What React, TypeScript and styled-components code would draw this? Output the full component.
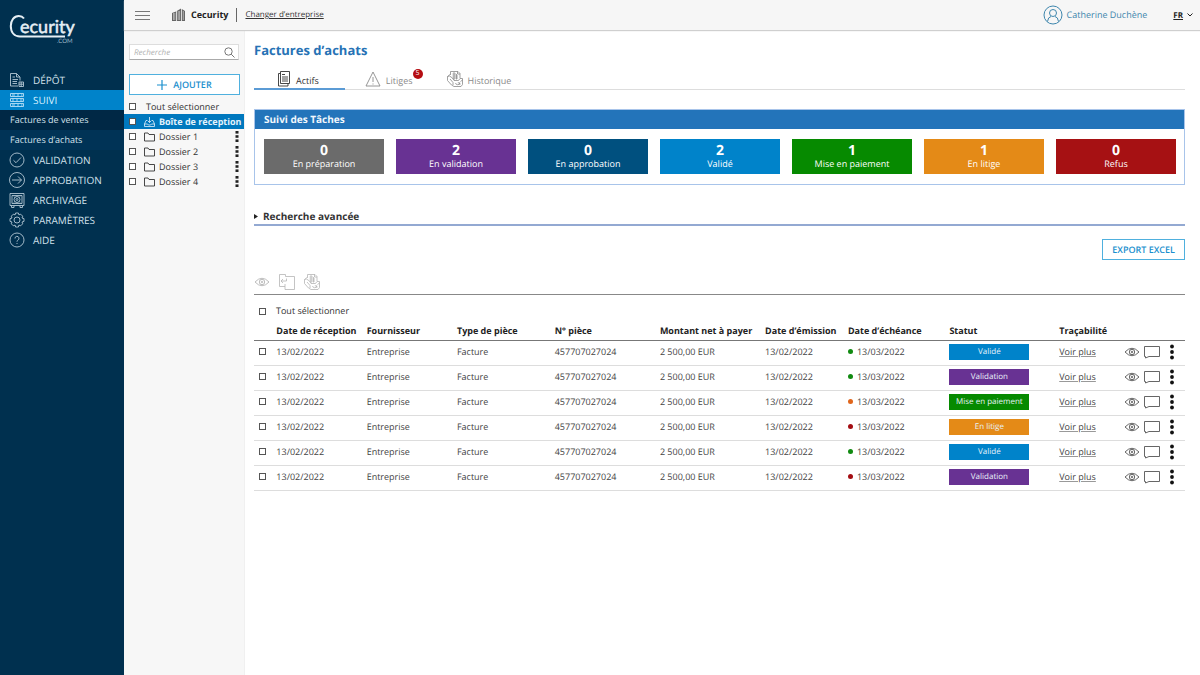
import React from "react";
import styled, { createGlobalStyle } from "styled-components";

const GlobalStyle = createGlobalStyle`
  *, *::before, *::after { box-sizing: border-box; }
  html, body { margin: 0; padding: 0; }
  body {
    background: #fff;
    color: #333;
    font-family: "Open Sans", "Noto Sans", sans-serif;
    font-size: 9px;
    line-height: 12px;
    text-rendering: geometricPrecision;
  }
  button, input { font-family: inherit; text-rendering: inherit; }
  button { cursor: pointer; }
  a { color: inherit; text-decoration: none; }
`;

const Page = styled.div`
  display: flex;
  min-height: 100vh;
`;

const Sidebar = styled.nav`
  flex: none;
  width: 124px;
  background: #00304f;
  color: #d3e1eb;
`;

const LogoLink = styled.a`
  display: block;
  height: 70px;
  padding: 12px 8px 0;
  svg { display: block; }
`;

const NavList = styled.ul`
  list-style: none;
  margin: 0;
  padding: 0;
`;

const NavLink = styled.a<{ $active?: boolean }>`
  display: flex;
  align-items: center;
  gap: 8px;
  height: 20px;
  padding-left: 9px;
  font-size: 10px;
  color: ${(p) => (p.$active ? "#d8f1ff" : "inherit")};
  background: ${(p) => (p.$active ? "#0083ca" : "transparent")};
  svg { opacity: 0.85; }
`;

const SubLink = styled.a<{ $current?: boolean }>`
  display: flex;
  align-items: center;
  height: 20px;
  padding-left: 10px;
  font-size: 9px;
  background: ${(p) => (p.$current ? "#003356" : "#002845")};
`;

const Main = styled.div`
  flex: 1;
  min-width: 0;
  display: flex;
  flex-direction: column;
`;

const TopBar = styled.header`
  display: flex;
  align-items: center;
  height: 30px;
  padding: 0 7px 0 11px;
  background: #f6f6f6;
  box-shadow: 0 1px 1px #cfcfcf;
  z-index: 1;
`;

const IconButton = styled.button`
  display: inline-flex;
  padding: 0;
  border: 0;
  background: none;
  color: inherit;
`;

const Company = styled.strong`
  display: flex;
  align-items: center;
  gap: 5px;
  margin-left: 22px;
  padding-right: 8px;
  border-right: 1px solid #666;
  font-size: 9px;
  line-height: 14px;
  color: #222;
`;

const SwitchLink = styled.a`
  margin-left: 8px;
  font-size: 8px;
  text-decoration: underline;
`;

const UserLink = styled.a`
  display: flex;
  align-items: center;
  gap: 4px;
  margin-left: auto;
  color: #3e86ad;
`;

const LangButton = styled.button`
  display: flex;
  align-items: center;
  gap: 4px;
  margin-left: 26px;
  padding: 0;
  border: 0;
  background: none;
  font-size: 8px;
  font-weight: 700;
  color: #222;
  span { text-decoration: underline; }
`;

const Body = styled.div`
  flex: 1;
  display: flex;
`;

const FolderPanel = styled.aside`
  flex: none;
  width: 121px;
  padding-top: 14px;
  background: #f7f7f7;
  border-right: 1px solid #f0f0f0;
`;

const SearchBox = styled.label`
  display: flex;
  align-items: center;
  height: 16px;
  margin: 0 5px;
  padding: 0 3px 0 4px;
  background: #fff;
  border: 1px solid #ddd;
  border-bottom-color: #aaa;
  border-radius: 1px;
  color: #777;
`;

const SearchInput = styled.input`
  flex: 1;
  min-width: 0;
  padding: 0;
  border: 0;
  outline: 0;
  background: none;
  font-size: 8px;
  &::placeholder { color: #b0b0b0; font-style: italic; opacity: 1; }
`;

const OutlineButton = styled.button`
  display: flex;
  align-items: center;
  justify-content: center;
  gap: 6px;
  height: 21px;
  padding: 0 9px;
  border: 1px solid #4fb0de;
  background: #fff;
  color: #1b8fce;
  font-size: 9px;
  font-weight: 600;
`;

const AddButton = styled(OutlineButton)`
  width: 111px;
  margin: 14px 0 4px 5px;
`;

const FolderRow = styled.div<{ $active?: boolean; $plain?: boolean }>`
  display: flex;
  align-items: center;
  height: 15px;
  padding: 0 5px;
  color: ${(p) => (p.$active ? "#e4f3fc" : "#333")};
  background: ${(p) => (p.$active ? "#0078be" : "transparent")};
  font-weight: ${(p) => (p.$active ? 700 : 400)};
  label {
    flex: 1;
    display: flex;
    align-items: center;
    gap: ${(p) => (p.$plain ? 6 : 4)}px;
    white-space: nowrap;
  }
`;

const Check = styled.input.attrs({ type: "checkbox" })`
  appearance: none;
  flex: none;
  display: block;
  width: 7px;
  height: 7px;
  margin: 0;
  border: 1px solid #555;
  background: #fff;
  &:checked { background: #555; }
`;

const FolderCheck = styled(Check)`
  margin-right: 4px;
`;

const Content = styled.main`
  flex: 1;
  min-width: 0;
  padding: 12px 15px 24px 9px;
`;

const Title = styled.h1`
  margin: 0;
  font-size: 13px;
  line-height: 16px;
  font-weight: 700;
  color: #2672b5;
`;

const Tabs = styled.div`
  display: flex;
  margin-top: 12px;
  border-bottom: 1px solid #ddd;
`;

const Tab = styled.button<{ $active?: boolean }>`
  display: flex;
  align-items: center;
  gap: 5px;
  height: 20px;
  margin-bottom: -1px;
  padding: 0 14px 0 20px;
  border: 0;
  border-bottom: 2px solid ${(p) => (p.$active ? "#5b9bd5" : "transparent")};
  background: none;
  color: ${(p) => (p.$active ? "#333" : "#8a8a8a")};
  font-size: 9px;
  &:first-child { padding: 0 26px 0 23px; }
`;

const TabLabel = styled.span`
  position: relative;
  padding-top: 3px;
`;

const Badge = styled.span`
  position: absolute;
  left: 100%;
  top: -2px;
  width: 10px;
  height: 10px;
  border-radius: 50%;
  background: #b50d12;
  color: #fff;
  font-size: 7px;
  line-height: 10px;
  text-align: center;
`;

const TaskPanel = styled.section`
  margin-top: 19px;
  border: 1px solid #a8c4ea;
`;

const TaskTitle = styled.h2`
  margin: 0;
  padding: 0 9px;
  font-size: 10px;
  line-height: 19px;
  color: #f2f8fd;
  background: #2374ba;
`;

const Tiles = styled.div`
  display: grid;
  grid-template-columns: repeat(7, 1fr);
  gap: 12px;
  padding: 10px 8px 10px 9px;
`;

const Tile = styled.button<{ $color: string }>`
  display: flex;
  flex-direction: column;
  align-items: center;
  height: 35px;
  padding: 4px 0 0;
  border: 0;
  background: ${(p) => p.$color};
  color: #fff;
  font-size: 9px;
  line-height: 12px;
  strong { font-size: 14px; line-height: 15px; }
`;

const Advanced = styled.button`
  display: flex;
  align-items: center;
  gap: 5px;
  width: 100%;
  margin-top: 24px;
  padding: 0 0 1px;
  border: 0;
  border-bottom: 2px solid #93a9d2;
  background: none;
  color: #333;
  font-size: 10px;
  line-height: 14px;
  font-weight: 700;
`;

const Actions = styled.div`
  display: flex;
  justify-content: flex-end;
  margin-top: 13px;
`;

const Tools = styled.div`
  display: flex;
  align-items: center;
  gap: 9px;
  height: 35px;
  padding-top: 10px;
  border-bottom: 1px solid #888;
  color: #b5b5b5;
`;

const SelectAll = styled.label`
  display: flex;
  align-items: center;
  gap: 10px;
  height: 16px;
  margin-top: 8px;
  padding-left: 5px;
`;

const Table = styled.table`
  width: 100%;
  table-layout: fixed;
  border-collapse: collapse;
  th, td { padding: 0; text-align: left; white-space: nowrap; }
  thead tr { height: 21px; border-bottom: 1px solid #777; }
  th {
    padding-top: 3px;
    font-weight: 700;
    color: #222;
  }
  tbody tr { height: 25px; border-bottom: 1px solid #ddd; }
  tbody td { padding-bottom: 2px; color: #444; }
  tbody td:first-child { padding-left: 5px; }
`;

const Col = styled.col<{ $share: number }>`
  width: ${(p) => p.$share}%;
`;

const Due = styled.span<{ $color: string }>`
  display: flex;
  align-items: center;
  gap: 4px;
  &::before {
    content: "";
    width: 5px;
    height: 5px;
    border-radius: 50%;
    background: ${(p) => p.$color};
  }
`;

const Status = styled.span<{ $color: string }>`
  display: block;
  width: 80px;
  height: 16px;
  background: ${(p) => p.$color};
  color: #e9f3fb;
  font-size: 8px;
  line-height: 16px;
  text-align: center;
`;

const MoreLink = styled.a`
  text-decoration: underline;
  text-decoration-color: #999;
`;

const RowTools = styled.div`
  display: flex;
  align-items: center;
  gap: 4px;
  color: #555;
  button:last-child { margin-left: 6px; }
`;

const Line: React.FC<{ w?: number; h?: number; box?: string; sw?: number; children: React.ReactNode }> = ({
  w = 16, h = 16, box = "0 0 16 16", sw = 1, children,
}) => (
  <svg width={w} height={h} viewBox={box} fill="none" stroke="currentColor" strokeWidth={sw} aria-hidden="true">
    {children}
  </svg>
);

const Eye = () => (
  <Line h={10} box="0 0 16 10" sw={0.9}>
    <path d="M1 5Q8-2.500 15 5Q8 12.500 1 5z" />
    <circle cx="8" cy="5" r="2.700" />
    <circle cx="8" cy="5" r="0.800" />
  </Line>
);

const Bubble = () => (
  <Line h={14} box="0 0 16 14" sw={0.9}>
    <path d="M0.500 1.500H15.500V11.500H5L1.500 13V11.500H0.500z" />
  </Line>
);

const Dots = () => (
  <svg width="4" height="16" viewBox="0 0 4 16" fill="#111" aria-hidden="true">
    <circle cx="2" cy="2.500" r="1.900" />
    <circle cx="2" cy="8" r="1.900" />
    <circle cx="2" cy="13.500" r="1.900" />
  </svg>
);

const FolderDots = () => (
  <svg width="4" height="11" viewBox="0 0 4 11" fill="#222" aria-hidden="true">
    <rect x="0.500" width="3" height="2.600" />
    <rect x="0.500" y="4.200" width="3" height="2.600" />
    <rect x="0.500" y="8.400" width="3" height="2.600" />
  </svg>
);

const Archive = () => (
  <Line sw={0.8}>
    <path d="M3.500 4V0.500H11L13 2.500V7M10.500 0.500V3H13M5.500 3H9M5.500 5H11M5.500 7H11M7 1V9M9.500 3V8.500" />
    <path d="M3 3.500L0.500 5.500V9.500L4.500 14L7 15.500H14L15.500 13.500V7.500H13L11.500 9.500H7L5.500 7L2.500 5L0.500 5.500M3 8L6 11.500V14M15.500 9L13.500 10.500" />
    <path d="M8.500 12A2.200 2.200 0 0 0 12.800 12M12.800 14V11.800H10.800" />
  </Line>
);

const Validated = () => (
  <Line sw={0.9}><circle cx="8" cy="8" r="7" /><path d="M4.500 8.300L7 10.700L12 5.500" /></Line>
);
const Arrow = () => (
  <Line sw={0.9}><circle cx="8" cy="8" r="7.500" /><path d="M3 8H12.500M9 4.500L12.500 8L9 11.500" /></Line>
);
const Deposit = () => (
  <Line sw={0.9}>
    <path d="M9 14H1.500V1.500H7.500L11 5V8.500M7.500 1.500V5H11M3.500 5H6M3.500 7.500H9M3.500 9.500H8M3.500 11.500H8" />
    <path d="M10 10H14.500V14.500H10zM10 12.200H14.500M12.200 10V14.500" />
  </Line>
);
const Tracking = () => (
  <Line sw={0.9}>
    <path d="M1.500 1.500H14.500V4.500H1.500zM1.500 6.500H14.500V9.500H1.500zM1.500 11.500H14.500V14.500H1.500z" />
    <path d="M3 3H6M8 3H10M12 3H13.500M3 8H5M7 8H9M11 8H13.500M3 13H6M8 13H10M12 13H13.500" />
  </Line>
);
const Vault = () => (
  <Line sw={0.9}>
    <path d="M1 1.500H15V13.500H1zM3 3.500H13V11.500H3zM2.500 13.500V15.500H5V13.500M11 13.500V15.500H13.500V13.500" />
    <circle cx="8" cy="7.500" r="3" /><circle cx="8" cy="7.500" r="1" />
    <path d="M5 4.500L6 5.500M11 4.500L10 5.500M5 10.500L6 9.500M11 10.500L10 9.500" />
  </Line>
);
const Gear = () => (
  <Line sw={0.9}>
    <path d="M6.600 1H9.400L9.900 2.900L11.700 2.200L13.700 4.200L13 6L15 6.600V9.400L13 10L13.700 11.800L11.700 13.800L9.900 13.100L9.400 15H6.600L6.100 13.100L4.300 13.800L2.300 11.800L3 10L1 9.400V6.600L3 6L2.300 4.200L4.300 2.200L6.100 2.900z" />
    <circle cx="8" cy="8" r="3" />
  </Line>
);
const Help = () => (
  <Line sw={0.9}>
    <circle cx="8" cy="8" r="7" />
    <path d="M6 6.500A2 2 0 1 1 8.800 8.200Q8 8.600 8 9.700M8 11V12" />
  </Line>
);

const FolderIcon = () => (
  <Line w={11} h={10} box="0 0 11 10" sw={0.9}>
    <path d="M0.500 1H4L5 2.500H10.500V9H0.500z" />
  </Line>
);
const Inbox = () => (
  <Line w={11} h={11} box="0 0 11 11" sw={0.8}>
    <path d="M3 4.500H2L0.500 8V10.500H10.500V8L9 4.500H8M0.500 8H3.500L4.500 9H6.500L7.500 8H10.500M5.500 1V6.500M3.500 4.500L5.500 6.500L7.500 4.500" />
  </Line>
);

const Logo = () => (
  <svg width="72" height="32" viewBox="0 0 72 32" role="img" aria-label="Cecurity.com" fill="none" stroke="#e6eff5">
    <path d="M16 6.500C14.500 4.500 12.500 4 10.800 4C6 4 2.800 8.500 2.800 14C2.800 20.500 6.500 24.500 12 24.500H57" strokeWidth="2" />
    <text x="12" y="21" fill="#e6eff5" strokeWidth="0.500" fontFamily="Lato, sans-serif" fontSize="18">ecurity</text>
    <text x="49" y="31" fill="#9db8c9" stroke="none" fontFamily="Lato, sans-serif" fontSize="6">.COM</text>
  </svg>
);

const navBefore = [{ label: "DÉPÔT", icon: <Deposit /> }, { label: "SUIVI", icon: <Tracking />, active: true }];
const navAfter = [
  { label: "VALIDATION", icon: <Validated /> },
  { label: "APPROBATION", icon: <Arrow /> },
  { label: "ARCHIVAGE", icon: <Vault /> },
  { label: "PARAMÈTRES", icon: <Gear /> },
  { label: "AIDE", icon: <Help /> },
];

const tiles = [
  { count: 0, label: "En préparation", color: "#6b6b6b" },
  { count: 2, label: "En validation", color: "#683293" },
  { count: 0, label: "En approbation", color: "#00507f" },
  { count: 2, label: "Validé", color: "#0083ca" },
  { count: 1, label: "Mise en paiement", color: "#068a00" },
  { count: 1, label: "En litige", color: "#e48a17" },
  { count: 0, label: "Refus", color: "#a61113" },
];

const GREEN = "#118a11";
const rows = [
  { due: GREEN, status: "Validé", color: "#0083ca" },
  { due: GREEN, status: "Validation", color: "#683293" },
  { due: "#e0661c", status: "Mise en paiement", color: "#068a00" },
  { due: "#a30d12", status: "En litige", color: "#e48a17" },
  { due: GREEN, status: "Validé", color: "#0083ca" },
  { due: "#a30d12", status: "Validation", color: "#683293" },
];

const shares = [2.4, 9.7, 9.7, 10.5, 11.3, 11.3, 8.9, 10.9, 11.8, 7, 6.5];
const heads = ["Date de réception", "Fournisseur", "Type de pièce", "N° pièce", "Montant net à payer", "Date d’émission", "Date d’échéance", "Statut", "Traçabilité"];

export default function App() {
  return (
    <Page>
      <GlobalStyle />
      <Sidebar aria-label="Navigation principale">
        <LogoLink href="#accueil"><Logo /></LogoLink>
        <NavList>
          {navBefore.map((n) => (
            <li key={n.label}><NavLink href="#" $active={n.active}>{n.icon}{n.label}</NavLink></li>
          ))}
          <li><SubLink href="#ventes">Factures de ventes</SubLink></li>
          <li><SubLink href="#achats" $current>Factures d’achats</SubLink></li>
          {navAfter.map((n) => (
            <li key={n.label}><NavLink href="#">{n.icon}{n.label}</NavLink></li>
          ))}
        </NavList>
      </Sidebar>
      <Main>
        <TopBar>
          <IconButton aria-label="Menu">
            <Line w={15} h={11} box="0 0 15 11"><path stroke="#777" d="M0 1.500H15M0 5.500H15M0 9.500H15" /></Line>
          </IconButton>
          <Company>
            <svg width="14" height="14" viewBox="0 0 14 14" fill="#666" aria-hidden="true">
              <path d="M0 5L4 3.500V13H0zM4.800 3L9 0.500V13H4.800zM9.800 1L13 3V13H9.800z" />
              <path stroke="#ddd" strokeWidth="0.600" d="M1.500 5V12M2.800 5V12M6.200 3V12M7.600 3V12M11.300 3V12" />
            </svg>
            Cecurity
          </Company>
          <SwitchLink href="#entreprise">Changer d’entreprise</SwitchLink>
          <UserLink href="#profil">
            <Line w={20} h={20} box="0 0 20 20">
              <circle cx="10" cy="10" r="9" /><circle cx="10" cy="8" r="3.500" />
              <path d="M4.500 16.500Q5 12 8 11.500M15.500 16.500Q15 12 12 11.500" />
            </Line>
            Catherine Duchène
          </UserLink>
          <LangButton><span>FR</span><Line w={6} h={4} box="0 0 6 4"><path d="M0.500 0.500L3 3L5.500 0.500" /></Line></LangButton>
        </TopBar>
        <Body>
          <FolderPanel>
            <SearchBox>
              <SearchInput type="search" placeholder="Recherche" aria-label="Recherche" />
              <Line w={11} h={11} box="0 0 11 11"><circle cx="4.500" cy="4.500" r="3.700" /><path d="M7.200 7.200L10.500 10.500" /></Line>
            </SearchBox>
            <AddButton>
              <Line w={10} h={10} box="0 0 10 10" sw={1.2}><path d="M5 0V10M0 5H10" /></Line>
              AJOUTER
            </AddButton>
            <FolderRow $plain><label><FolderCheck />Tout sélectionner</label></FolderRow>
            <FolderRow $active><label><FolderCheck /><Inbox />Boîte de réception</label></FolderRow>
            {[1, 2, 3, 4].map((n) => (
              <FolderRow key={n}>
                <label><FolderCheck /><FolderIcon />Dossier {n}</label>
                <IconButton aria-label={`Options du dossier ${n}`}><FolderDots /></IconButton>
              </FolderRow>
            ))}
          </FolderPanel>
          <Content>
            <Title>Factures d’achats</Title>
            <Tabs role="tablist">
              <Tab role="tab" aria-selected $active>
                <Line w={14} h={16} box="0 0 14 16" sw={0.9}>
                  <path d="M3.500 0.500H12.500V12.500H3.500zM3.500 2.500H1.500V15H11V12.500M5 3.500H8M5 6H11M5 8H11M5 10H11" />
                </Line>
                <TabLabel>Actifs</TabLabel>
              </Tab>
              <Tab role="tab">
                <Line sw={0.9}><path d="M8 1L15 15H1zM8 6V11M8 12.500V13.500" /></Line>
                <TabLabel>Litiges<Badge>5</Badge></TabLabel>
              </Tab>
              <Tab role="tab"><Archive /><TabLabel>Historique</TabLabel></Tab>
            </Tabs>
            <TaskPanel>
              <TaskTitle>Suivi des Tâches</TaskTitle>
              <Tiles>
                {tiles.map((t) => (
                  <Tile key={t.label} $color={t.color}><strong>{t.count}</strong><span>{t.label}</span></Tile>
                ))}
              </Tiles>
            </TaskPanel>
            <Advanced aria-expanded={false}>
              <svg width="4" height="5" viewBox="0 0 4 5" aria-hidden="true"><path d="M0 0L4 2.500L0 5z" fill="#222" /></svg>
              Recherche avancée
            </Advanced>
            <Actions><OutlineButton>EXPORT EXCEL</OutlineButton></Actions>
            <Tools>
              <IconButton aria-label="Voir"><Eye /></IconButton>
              <IconButton aria-label="Déplacer">
                <Line sw={0.8}><path d="M6.500 2.500V0.500H0.500V12.500H6M6.500 2.500H15.500V15.500H6V10M2 7H7.500M4 5L2 7L4 9M7.500 7V4.500" /></Line>
              </IconButton>
              <IconButton aria-label="Archiver"><Archive /></IconButton>
            </Tools>
            <SelectAll><Check />Tout sélectionner</SelectAll>
            <Table>
              <colgroup>{shares.map((s, i) => <Col key={i} $share={s} />)}</colgroup>
              <thead>
                <tr><td />{heads.map((h) => <th key={h} scope="col">{h}</th>)}<td /></tr>
              </thead>
              <tbody>
                {rows.map((r, i) => (
                  <tr key={i}>
                    <td><Check aria-label={`Sélectionner la ligne ${i + 1}`} /></td>
                    <td>13/02/2022</td>
                    <td>Entreprise</td>
                    <td>Facture</td>
                    <td>457707027024</td>
                    <td>2 500,00 EUR</td>
                    <td>13/02/2022</td>
                    <td><Due $color={r.due}>13/03/2022</Due></td>
                    <td><Status $color={r.color}>{r.status}</Status></td>
                    <td><MoreLink href="#trace">Voir plus</MoreLink></td>
                    <td>
                      <RowTools>
                        <IconButton aria-label="Voir"><Eye /></IconButton>
                        <IconButton aria-label="Commenter"><Bubble /></IconButton>
                        <IconButton aria-label="Plus d’options"><Dots /></IconButton>
                      </RowTools>
                    </td>
                  </tr>
                ))}
              </tbody>
            </Table>
          </Content>
        </Body>
      </Main>
    </Page>
  );
}
